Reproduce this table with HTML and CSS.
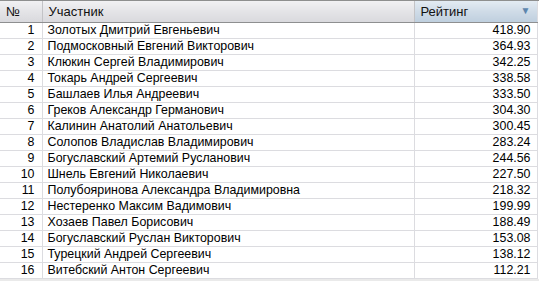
FILE: index.html
```html
<!DOCTYPE html>
<html>
<head>
<meta charset="utf-8">
<link rel="stylesheet" href="styles.css">
</head>
<body>
<div class="grid">
<table class="tbl">
<colgroup><col class="c-num"><col class="c-name"><col class="c-rate"></colgroup>
<thead>
<tr><th class="h-num">№</th><th class="h-name">Участник</th><th class="h-rate sorted"><span>Рейтинг</span><span class="arrow">▼</span></th></tr>
</thead>
<tbody>
<tr><td class="num">1</td><td>Золотых Дмитрий Евгеньевич</td><td class="rate">418.90</td></tr>
<tr><td class="num">2</td><td>Подмосковный Евгений Викторович</td><td class="rate">364.93</td></tr>
<tr><td class="num">3</td><td>Клюкин Сергей Владимирович</td><td class="rate">342.25</td></tr>
<tr><td class="num">4</td><td>Токарь Андрей Сергеевич</td><td class="rate">338.58</td></tr>
<tr><td class="num">5</td><td>Башлаев Илья Андреевич</td><td class="rate">333.50</td></tr>
<tr><td class="num">6</td><td>Греков Александр Германович</td><td class="rate">304.30</td></tr>
<tr><td class="num">7</td><td>Калинин Анатолий Анатольевич</td><td class="rate">300.45</td></tr>
<tr><td class="num">8</td><td>Солопов Владислав Владимирович</td><td class="rate">283.24</td></tr>
<tr><td class="num">9</td><td>Богуславский Артемий Русланович</td><td class="rate">244.56</td></tr>
<tr><td class="num">10</td><td>Шнель Евгений Николаевич</td><td class="rate">227.50</td></tr>
<tr><td class="num">11</td><td>Полубояринова Александра Владимировна</td><td class="rate">218.32</td></tr>
<tr><td class="num">12</td><td>Нестеренко Максим Вадимович</td><td class="rate">199.99</td></tr>
<tr><td class="num">13</td><td>Хозаев Павел Борисович</td><td class="rate">188.49</td></tr>
<tr><td class="num">14</td><td>Богуславский Руслан Викторович</td><td class="rate">153.08</td></tr>
<tr><td class="num">15</td><td>Турецкий Андрей Сергеевич</td><td class="rate">138.12</td></tr>
<tr><td class="num">16</td><td>Витебский Антон Сергеевич</td><td class="rate">112.21</td></tr>
</tbody>
</table>
</div>
</body>
</html>
```
FILE: styles.css
```css
html, body { margin: 0; padding: 0; }
body { width: 539px; height: 281px; background: #eaeaea; overflow: hidden; font-family: "Liberation Sans", Arial, sans-serif; }
.grid { background: #ffffff; border-top: 1px solid #8e8f8f; }
.tbl { border-collapse: collapse; table-layout: fixed; width: 537px; font-size: 12.4px; color: #000; }
.c-num { width: 42px; }
.c-name { width: 372px; }
.c-rate { width: 123px; }
thead th { height: 21px; padding: 0 6px; text-align: left; font-weight: normal; font-size: 13px; color: #111;
  background: linear-gradient(#f1f1f3, #e4e4e7 50%, #d9d9dd); border-right: 1px solid #c3c3c6; border-bottom: 1px solid #8e8f90; }
.h-num { padding-left: 6px; }
thead th.sorted { background: linear-gradient(#e3ebf3, #cfdbe7 50%, #bfcfde); position: relative; }
.arrow { position: absolute; right: 6px; top: 4px; font-size: 10px; color: #5d85ad; }
tbody td { height: 15px; padding: 0 5px; border-right: 1px solid #dcdce0; border-bottom: 1px solid #dcdce0; white-space: nowrap; line-height: 15px; }
td.num { text-align: right; padding-right: 7px; }
td.rate { text-align: right; padding-right: 6px; }
tbody td:last-child, thead th:last-child { border-right: 1px solid #dcdce0; }
```
